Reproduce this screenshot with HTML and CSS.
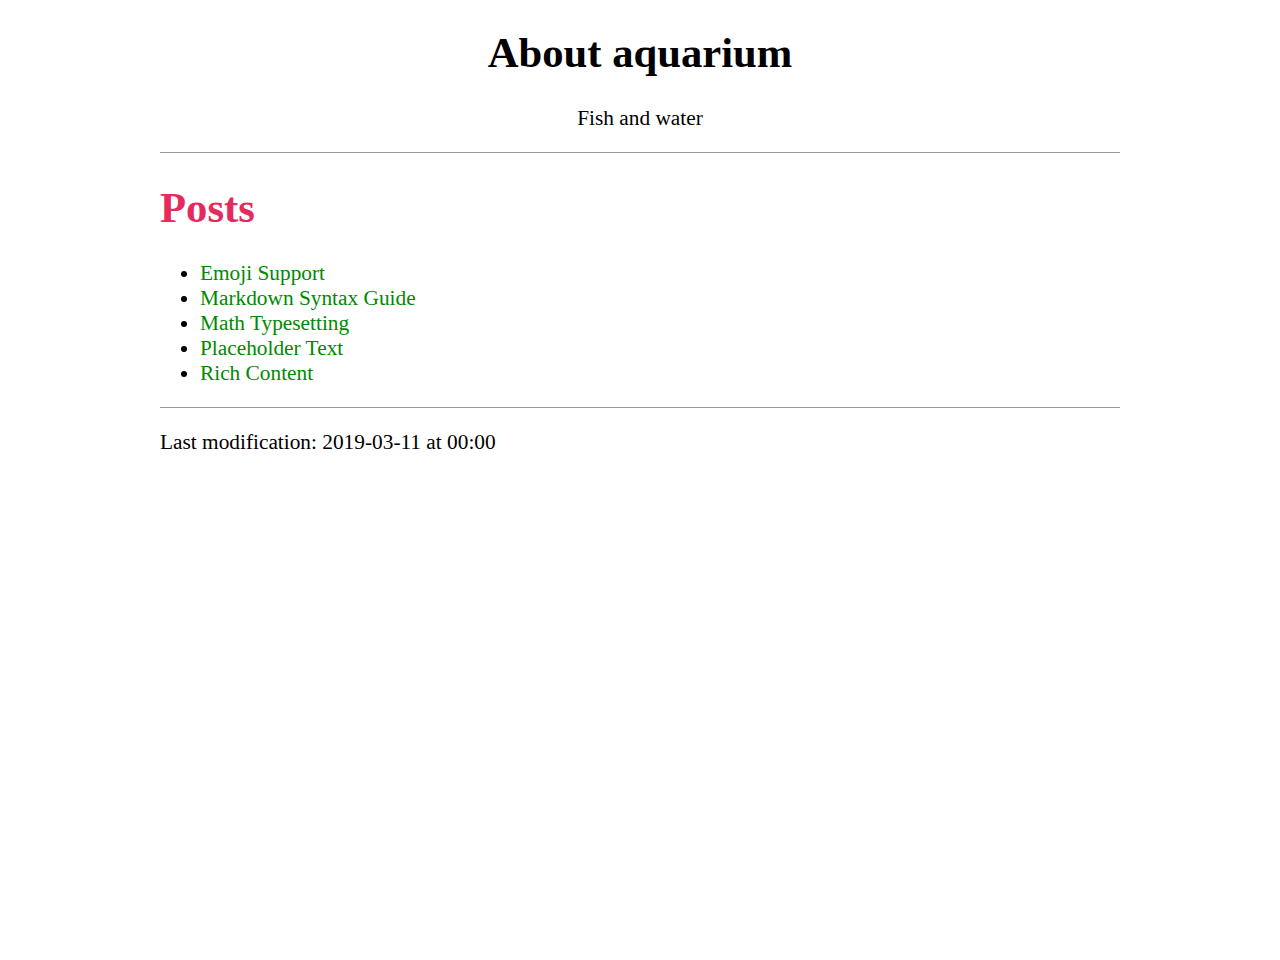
FILE: index.html
```html
<!DOCTYPE html>
<html lang="en">
<head>
<meta charset="utf-8">
<title>About aquarium</title>
<link rel="stylesheet" href="styles.css">
</head>
<body>
<div class="page">
  <header class="site-header">
    <h1 class="site-title">About aquarium</h1>
    <p class="site-desc">Fish and water</p>
  </header>
  <hr class="rule">
  <main>
    <h2 class="section-title">Posts</h2>
    <ul class="post-list">
      <li><a href="#">Emoji Support</a></li>
      <li><a href="#">Markdown Syntax Guide</a></li>
      <li><a href="#">Math Typesetting</a></li>
      <li><a href="#">Placeholder Text</a></li>
      <li><a href="#">Rich Content</a></li>
    </ul>
  </main>
  <hr class="rule">
  <footer class="site-footer">Last modification: 2019-03-11 at 00:00</footer>
</div>
</body>
</html>
```
FILE: styles.css
```css
html, body {
  margin: 0;
  padding: 0;
  background: #fff;
}
body {
  font-family: "Liberation Serif", "Times New Roman", serif;
  font-size: 21.33px;
  line-height: 25px;
  color: #000;
}
.page {
  width: 960px;
  margin: 0 auto;
  padding-top: 8px;
}
.site-header {
  text-align: center;
}
.site-title {
  font-size: 42.67px;
  line-height: 50px;
  margin: 20px 0 0;
  font-weight: bold;
}
.site-desc {
  margin: 28px 0 0;
}
.rule {
  border: 0;
  border-top: 1px solid #999;
  margin: 21px 0 0;
  height: 0;
}
.section-title {
  color: #e52b5e;
  font-size: 42.67px;
  line-height: 50px;
  margin: 30px 0 0;
}
.post-list {
  margin: 28px 0 0;
  padding-left: 40px;
}
.post-list a {
  color: #008a00;
  text-decoration: none;
}
main + .rule {
  margin-top: 21px;
}
.site-footer {
  margin-top: 22px;
}
```
